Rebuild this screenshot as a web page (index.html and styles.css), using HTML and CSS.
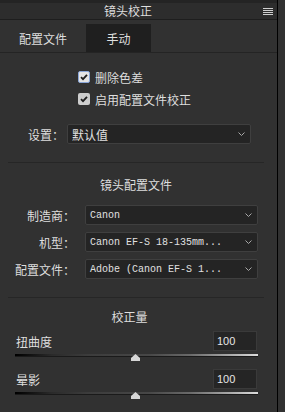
FILE: index.html
```html
<!DOCTYPE html>
<html lang="zh-CN">
<head>
<meta charset="utf-8">
<title>镜头校正</title>
<link rel="stylesheet" href="styles.css">
</head>
<body>
<div class="panel">
  <div class="header">
    <div class="title">镜头校正</div>
    <svg class="menu" width="10" height="7" viewBox="0 0 10 7"><rect x="0" y="0" width="10" height="1" fill="#d0d0d0"/><rect x="0" y="2" width="10" height="1" fill="#d0d0d0"/><rect x="0" y="4" width="10" height="1" fill="#d0d0d0"/><rect x="0" y="6" width="10" height="1" fill="#d0d0d0"/></svg>
  </div>
  <div class="tabs">
    <div class="tab tab-profile">配置文件</div>
    <div class="tab tab-manual">手动</div>
  </div>
  <div class="checks">
    <div class="check-row">
      <span class="box box-focus"><svg width="10" height="10" viewBox="0 0 10 10"><path d="M2 5.2 L4 7.2 L8 2.8" fill="none" stroke="#1e1e1e" stroke-width="1.8"/></svg></span>
      <span>删除色差</span>
    </div>
    <div class="check-row">
      <span class="box"><svg width="10" height="10" viewBox="0 0 10 10"><path d="M2 5.2 L4 7.2 L8 2.8" fill="none" stroke="#1e1e1e" stroke-width="1.8"/></svg></span>
      <span>启用配置文件校正</span>
    </div>
  </div>
  <div class="setting-row">
    <span class="setting-label">设置：</span>
    <div class="select select-setting"><span>默认值</span><svg width="7" height="4" viewBox="0 0 7 4"><polyline points="0.5,0.5 3.5,3.5 6.5,0.5" fill="none" stroke="#a8a8a8" stroke-width="1"/></svg></div>
  </div>
  <div class="sep"></div>
  <div class="section-title title-lens">镜头配置文件</div>
  <div class="lens-rows">
    <div class="lens-row">
      <span class="lens-label">制造商：</span>
      <div class="select select-lens mono"><span>Canon</span><svg width="7" height="4" viewBox="0 0 7 4"><polyline points="0.5,0.5 3.5,3.5 6.5,0.5" fill="none" stroke="#a8a8a8" stroke-width="1"/></svg></div>
    </div>
    <div class="lens-row">
      <span class="lens-label">机型：</span>
      <div class="select select-lens mono"><span>Canon EF-S 18-135mm...</span><svg width="7" height="4" viewBox="0 0 7 4"><polyline points="0.5,0.5 3.5,3.5 6.5,0.5" fill="none" stroke="#a8a8a8" stroke-width="1"/></svg></div>
    </div>
    <div class="lens-row">
      <span class="lens-label">配置文件：</span>
      <div class="select select-lens mono"><span>Adobe (Canon EF-S 1...</span><svg width="7" height="4" viewBox="0 0 7 4"><polyline points="0.5,0.5 3.5,3.5 6.5,0.5" fill="none" stroke="#a8a8a8" stroke-width="1"/></svg></div>
    </div>
  </div>
  <div class="sep sep2"></div>
  <div class="section-title title-amount">校正量</div>
  <div class="slider-block first">
    <div class="slider-head">
      <span>扭曲度</span>
      <div class="num">100</div>
    </div>
    <div class="track">
      <svg class="thumb" style="left:49.4%" width="9" height="7" viewBox="0 0 9 7"><polygon points="4.5,0 9,4 9,7 0,7 0,4" fill="#d6d6d6"/></svg>
    </div>
  </div>
  <div class="slider-block">
    <div class="slider-head">
      <span>晕影</span>
      <div class="num">100</div>
    </div>
    <div class="track">
      <svg class="thumb" style="left:49.4%" width="9" height="7" viewBox="0 0 9 7"><polygon points="4.5,0 9,4 9,7 0,7 0,4" fill="#d6d6d6"/></svg>
    </div>
  </div>
</div>
</body>
</html>
```
FILE: styles.css
```css
* { box-sizing: border-box; }
html, body { margin: 0; padding: 0; }
body {
  width: 285px;
  height: 412px;
  overflow: hidden;
  background: #313131;
  font-family: "Noto Sans CJK SC", "Noto Sans", sans-serif;
  font-size: 12px;
  color: #dedede;
}
.panel {
  width: 278px;
  height: 412px;
  border-right: 1px solid #000;
  background: #313131;
}
.header {
  height: 20px;
  background: #2d2d2d;
  border-top: 3px solid #242424;
  border-bottom: 1px solid #1e1e1e;
  display: flex;
  align-items: center;
}
.title {
  flex: 1;
  text-align: center;
  line-height: 16px;
  padding-right: 7px;
}
.menu { margin-right: 4px; flex: none; }
.tabs {
  display: flex;
  height: 33px;
  padding-top: 4px;
  border-bottom: 1px solid #242424;
}
.tab {
  height: 28px;
  line-height: 28px;
  padding-top: 1px;
  text-align: center;
}
.tab-profile { width: 86px; }
.tab-manual { width: 65px; background: #1f1f1f; }
.checks {
  margin-top: 13px;
  padding-left: 78px;
}
.check-row {
  height: 22px;
  display: flex;
  align-items: center;
  gap: 5px;
}
.box {
  width: 12px;
  height: 12px;
  border-radius: 2px;
  background: #cdcdcd;
  display: flex;
  align-items: center;
  justify-content: center;
}
.box-focus { border: 1px solid #8aa6d8; background: #e4e4e4; }
.setting-row {
  margin-top: 14px;
  display: flex;
  align-items: center;
  padding-left: 28px;
  height: 20px;
}
.setting-label { width: 39px; }
.select {
  height: 20px;
  background: #242424;
  border: 1px solid #3f3f3f;
  border-radius: 2px;
  display: flex;
  align-items: center;
  justify-content: space-between;
  padding: 0 5px 0 4px;
  color: #e0e0e0;
}
.select-setting { width: 184px; }
.mono {
  font-family: "Liberation Mono", monospace;
  font-size: 10px;
}
.sep {
  margin: 18px 0 0 8px;
  width: 256px;
  height: 1px;
  background: #262626;
}
.section-title {
  line-height: 20px;
  text-align: center;
}
.title-lens { margin-top: 12px; width: 272px; }
.title-amount { margin-top: 10px; width: 259px; line-height: 18px; }
.lens-rows {
  margin-top: 10px;
  display: flex;
  flex-direction: column;
  gap: 7px;
}
.lens-row {
  display: flex;
  align-items: center;
  height: 20px;
}
.lens-label {
  width: 75px;
  text-align: right;
}
.select-lens { margin-left: 10px; width: 173px; }
.slider-block { margin-top: 12px; }
.slider-block.first { margin-top: 5px; }
.slider-head {
  height: 20px;
  display: flex;
  align-items: center;
  justify-content: space-between;
  padding-left: 16px;
  padding-right: 20px;
}
.num {
  width: 44px;
  height: 20px;
  background: #252525;
  border: 1px solid #3a3a3a;
  padding-left: 3px;
  line-height: 18px;
  font-family: "Liberation Sans", sans-serif;
  font-size: 11px;
  color: #e6e6e6;
}
.track {
  position: relative;
  margin: 3px 0 0 15px;
  width: 243px;
  height: 3px;
  background: linear-gradient(to right, #000 0%, #2a2a2a 15%, #3c3c3c 30%, #474747 55%, #6a6a6a 72%, #a8a8a8 88%, #dcdcdc 100%);
  border-bottom: 1px solid #1a1a1a;
}
.thumb {
  position: absolute;
  top: 0;
  margin-left: -4px;
}
```
